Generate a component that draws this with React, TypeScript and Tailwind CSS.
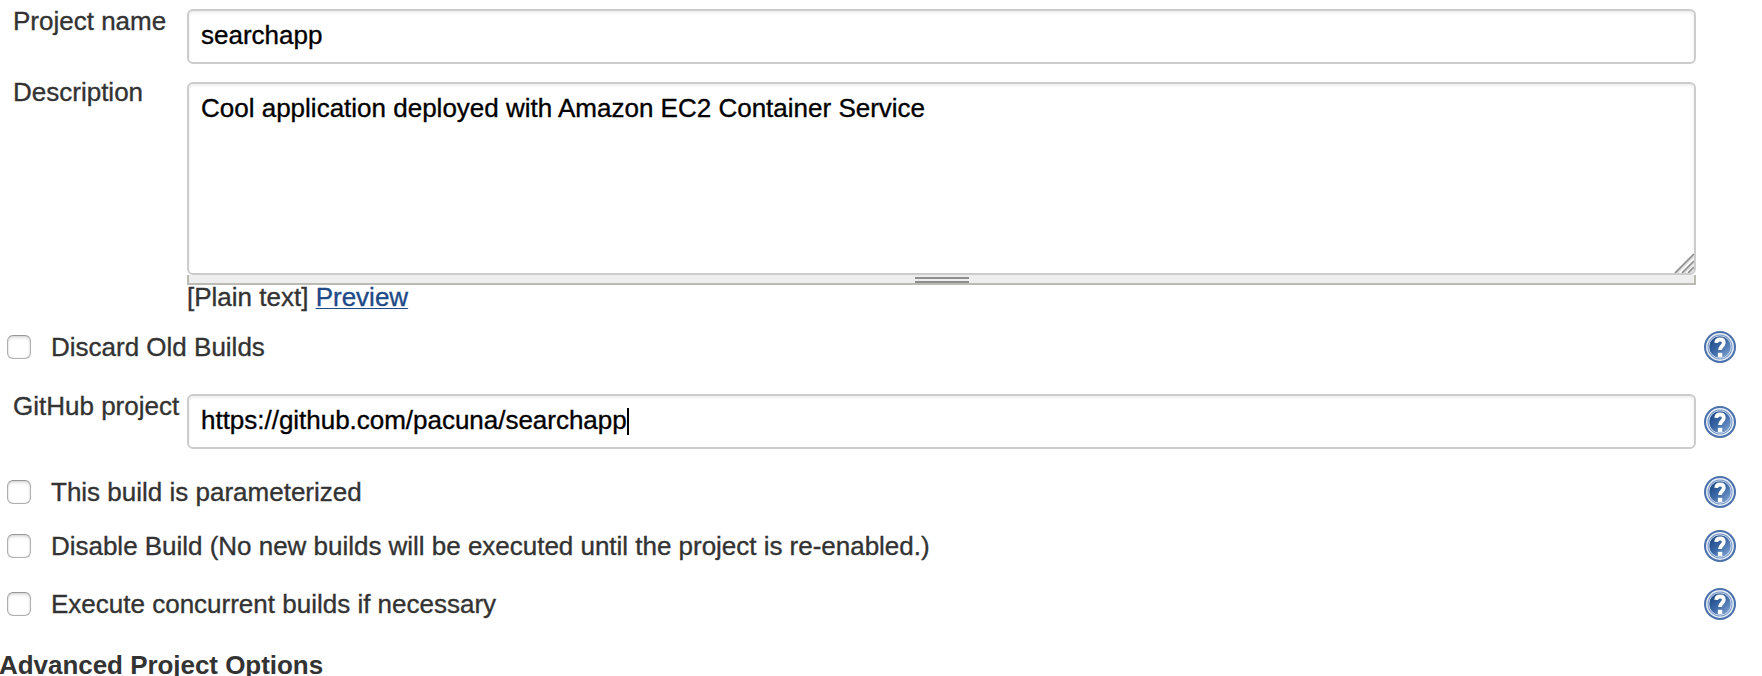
import type { ReactNode } from "react";

function HelpIcon() {
  return (
    <svg width="32" height="32" viewBox="0 0 32 32" className="block shrink-0" role="img">
      <defs>
        <linearGradient id="helpFill" x1="0" y1="0" x2="1" y2="1">
          <stop offset="0.2" stopColor="#25508f" />
          <stop offset="0.5" stopColor="#3c69a8" />
          <stop offset="1" stopColor="#8fb0dc" />
        </linearGradient>
      </defs>
      <circle cx="16" cy="16" r="16" fill="#4a71ab" />
      <circle cx="16" cy="16" r="13.2" fill="#6f92c4" stroke="#e9eff7" strokeWidth="1.5" />
      <circle cx="16" cy="16" r="11.2" fill="url(#helpFill)" stroke="#dbe5f2" strokeWidth="0.9" />
      <path
        d="M12.2 11.8C12.4 9.3 14 8.5 16 8.5c2.3 0 3.8 1.2 3.8 3.3 0 3.2-3.8 3.5-3.8 7.2"
        fill="none"
        stroke="#fff"
        strokeWidth="3.8"
      />
      <rect x="13.9" y="21.8" width="4.4" height="4.4" fill="#fff" />
    </svg>
  );
}

function TextField({ children }: { children: ReactNode }) {
  return (
    <div className="flex h-[55px] w-[1509px] shrink-0 rounded-md border-2 border-[#ccc] bg-white pt-[9px] pl-3 text-black shadow-[inset_0_2px_3px_rgba(0,0,0,0.07)]">
      {children}
    </div>
  );
}

function Label({ children }: { children: ReactNode }) {
  return <div className="w-[187px] shrink-0 pl-[13px]">{children}</div>;
}

function CheckRow({ children }: { children: ReactNode }) {
  return (
    <div className="flex h-8 items-center pl-[7px]">
      <div className="size-6 shrink-0 rounded-md border border-[#b0b0b0] border-t-[#989898] bg-white shadow-[inset_0_2px_3px_rgba(0,0,0,0.13),inset_0_0_1px_rgba(0,0,0,0.3)]" />
      <div className="ml-5 h-[30px] w-[1653px] shrink-0">{children}</div>
      <HelpIcon />
    </div>
  );
}

export default function App() {
  return (
    <div className="h-[676px] w-[1762px] overflow-hidden bg-white font-['Liberation_Sans',Arial,sans-serif] text-[26px] leading-[30px] whitespace-nowrap text-[#333] [-webkit-text-stroke:0.35px_currentColor]">
      <div className="flex h-[73px] pt-[6px]">
        <Label>Project name</Label>
        <div className="pt-[3px]">
          <TextField>searchapp</TextField>
        </div>
      </div>

      <div className="flex h-[258px] pt-1">
        <Label>Description</Label>
        <div className="w-[1509px] pt-[5px]">
          <div className="flex h-[193px] justify-between rounded-md border-2 border-[#ccc] pt-[9px] pl-3 text-black shadow-[inset_0_2px_3px_rgba(0,0,0,0.07)]">
            <div>Cool application deployed with Amazon EC2 Container Service</div>
            <svg width="20" height="20" viewBox="0 0 20 20" className="self-end">
              <path d="M2 20 20 2M9 20 20 9M15 20l5-5" stroke="#ddd" strokeWidth="3.6" />
              <path d="M1 20 20 1M8 20 20 8M14 20l6-6" stroke="#8c8c8c" strokeWidth="1.5" />
            </svg>
          </div>
          <div className="flex h-[10px] justify-center border-x-2 border-b-2 border-[#bbbbb3] bg-[#eee] pt-[2px]">
            <div className="h-[6px] w-[54px] border-y-2 border-[#8e8e8c]" />
          </div>
          <div className="-mt-[3px]">
            [Plain text]{" "}
            <a className="text-[#204a87] underline decoration-1 underline-offset-2 [text-decoration-skip-ink:none]">
              Preview
            </a>
          </div>
        </div>
      </div>

      <CheckRow>Discard Old Builds</CheckRow>

      <div className="flex h-[113px] pt-7">
        <Label>GitHub project</Label>
        <div className="pt-[3px]">
          <TextField>
            <span className="tracking-[-0.02px]">https://github.com/pacuna/searchapp</span>
            <span className="mt-[3px] h-[27px] w-[2px] bg-black" />
          </TextField>
        </div>
        <div className="pt-[15px] pl-2">
          <HelpIcon />
        </div>
      </div>

      <CheckRow>This build is parameterized</CheckRow>
      <div className="mt-[22px]">
        <CheckRow>
          <span className="tracking-[-0.02px]">
            Disable Build (No new builds will be executed until the project is re-enabled.)
          </span>
        </CheckRow>
      </div>
      <div className="mt-[26px]">
        <CheckRow>Execute concurrent builds if necessary</CheckRow>
      </div>
      <h2 className="mt-[30px] -ml-px font-bold tracking-[-0.04px] [-webkit-text-stroke:0]">
        Advanced Project Options
      </h2>
    </div>
  );
}
